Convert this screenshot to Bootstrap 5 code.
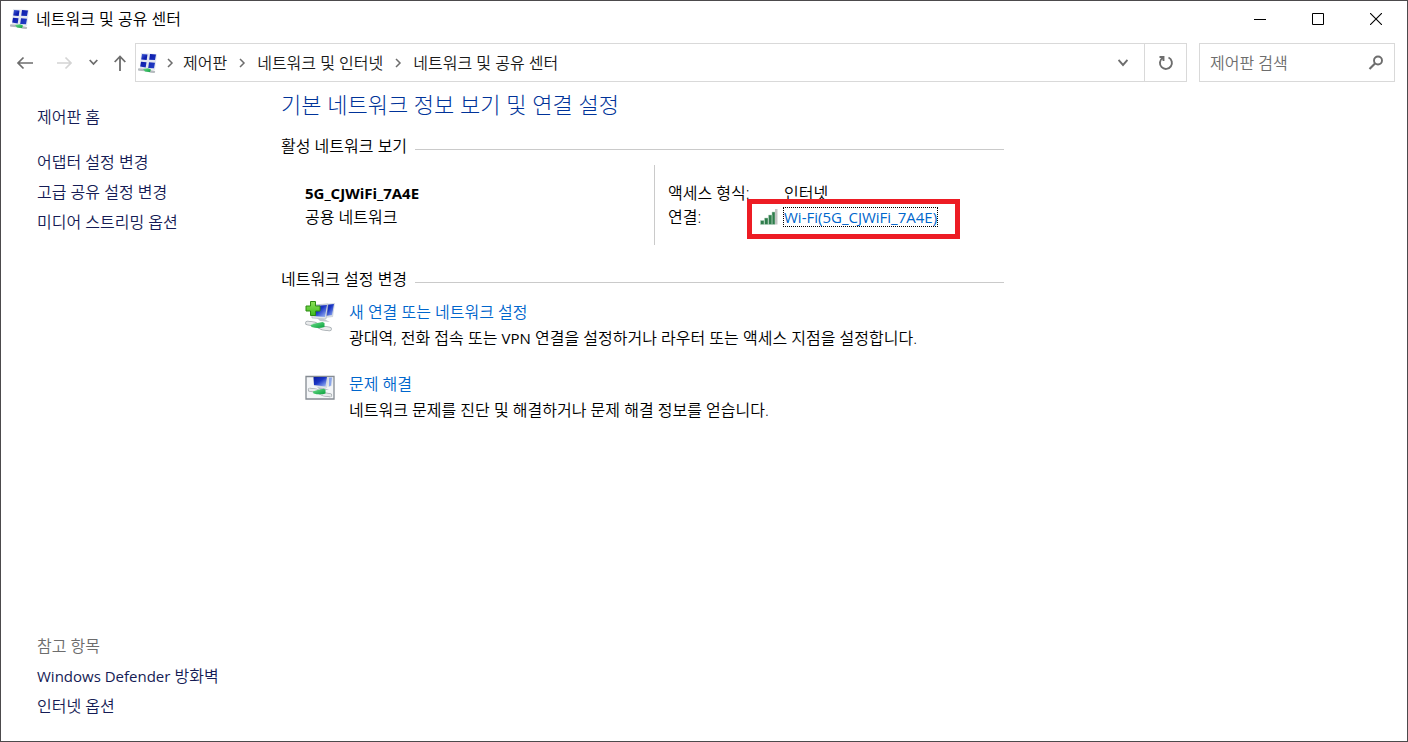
<!DOCTYPE html>
<html lang="ko">
<head>
<meta charset="utf-8">
<meta name="viewport" content="width=device-width, initial-scale=1">
<title>네트워크 및 공유 센터</title>
<link rel="stylesheet" href="https://cdn.jsdelivr.net/npm/bootstrap@5.3.0/dist/css/bootstrap.min.css">
<style>
  body { font: 350 16px/24px "Open Sans", "Noto Sans CJK KR", sans-serif; color: #000; background: #fff; }
  .win { border: 1px solid #4c4a4c; min-height: 100vh; }
  svg { display: block; flex: none; }
  a { text-decoration: none; }
  .titlebar { height: 36px; padding: 0 2px 0 9px; gap: 6px; }
  .cap { width: 58px; height: 36px; border: 0; background: none; padding: 0; display: grid; place-items: center; color: #000; }
  .toolbar { height: 39px; margin: 6px 12px 0 15px; }
  .tool { border: 0; background: none; padding: 0; color: #6d6d6d; }
  .tool:disabled { color: #d4d4d4; }
  .boxed { border: 1px solid #d9d9d9; height: 39px; }
  .address { padding-left: 2px; color: #6d6d6d; margin-left: 9px; }
  .crumb { color: #1a1a1a; }
  .sep { margin: 0 9px; }
  .refresh { width: 42px; height: 37px; border: 0; border-left: 1px solid #d9d9d9; background: none; padding: 0; display: grid; place-items: center; color: #6d6d6d; }
  .search { width: 196px; margin-left: 12px; padding: 0 10px; color: #6d6d6d; }
  .search input { border: 0; outline: 0; padding: 0; width: 100%; min-width: 0; background: none; font-weight: inherit; }
  .search input::placeholder { color: #6d6d6d; opacity: 1; }
  .side { width: 243px; padding: 20px 0 20px 36px; line-height: 30px; }
  .side a { color: #151c55; }
  .home { margin-bottom: 15px; }
  .see-also { color: #6d6d6d; }
  .latin { font-size: 15px; font-weight: 400; }
  .content-pane { width: 760px; padding: 8px 0 0 37px; }
  h1 { font-size: 22px; line-height: 28px; color: #003399; font-weight: 300; margin: 0 0 16px; }
  h2 { font-size: 16px; line-height: 24px; font-weight: 350; margin: 0; }
  .rule { height: 1px; background: #cacaca; margin: 6px 0 0 8px; }
  .active-net { height: 80px; margin: 7px 0 22px 24px; }
  .net-name { width: 350px; padding-top: 16px; border-right: 1px solid #cacaca; }
  .net-title { font-size: 15px; }
  .net-info { padding: 16px 0 0 13px; }
  .key { width: 116px; }
  .blue { color: #0066cc; }
  .wifi { position: relative; margin-left: -25px; gap: 5px; }
  .wifi::after { content: ""; position: absolute; inset: -6px -23px -10px -12px; border: 5px solid #ed1c24; pointer-events: none; }
  .wifi a { outline: 1px dotted #000; line-height: 18px; }
  .task { margin-left: 24px; gap: 13px; line-height: 26px; }
</style>
</head>
<body>
<svg width="0" height="0" class="position-absolute" aria-hidden="true">
  <defs>
    <linearGradient id="scr" x1="0" y1="0" x2="1" y2="1"><stop offset="0" stop-color="#0a1a9c"/><stop offset=".45" stop-color="#1a35c4"/><stop offset="1" stop-color="#a9c4fb"/></linearGradient>
    <linearGradient id="grn" x1="0" y1="0" x2="1" y2="1"><stop offset="0" stop-color="#6fdc8c"/><stop offset="1" stop-color="#07a13c"/></linearGradient>
    <linearGradient id="plus" x1="0" y1="0" x2="0" y2="1"><stop offset="0" stop-color="#8be05a"/><stop offset="1" stop-color="#3dbb1c"/></linearGradient>
    <linearGradient id="pane" x1="0" y1="0" x2="1" y2="1"><stop offset="0" stop-color="#4a6ae0"/><stop offset=".3" stop-color="#0c1cac"/><stop offset="1" stop-color="#2742c8"/></linearGradient>
    <symbol id="net" viewBox="0 0 20 20">
      <path d="M3 0l16 1-2 16-15-2z" fill="#e3e7f0"/>
      <path d="M4 1l5.500.5-.8 5.500-5.500-.5zM12 1l6 .5-1 5.500-5.800-.3zM3 8.700l5.500.5-.8 5.300-5.500-1zM11 9.200l6 .5-1 5.500-5.800-.3z" fill="url(#pane)"/>
      <path d="M1 16.500l6 .5 6 1.500 3 .3" stroke="#b5babe" stroke-width="2.300" fill="none" stroke-linecap="round"/>
      <path d="M5 16l5-.8 3 1.300-1 2.500-5-.5z" fill="url(#grn)"/>
    </symbol>
    <symbol id="cable" viewBox="0 0 26 12">
      <path d="M2 3l7 1 8 4 7 1" stroke="#9fa6ab" stroke-width="4.600" fill="none" stroke-linecap="round"/>
      <path d="M2 3l7 1 8 4 7 1" stroke="#e9ebec" stroke-width="3" fill="none" stroke-linecap="round"/>
      <path d="M5 5q5-2 12-3l2 1v4q-6 2-13 0z" fill="url(#grn)"/>
    </symbol>
  </defs>
</svg>
<div class="win d-flex flex-column">
  <header class="titlebar d-flex align-items-center">
    <svg width="20" height="20"><use href="#net"/></svg>
    <span class="me-auto">네트워크 및 공유 센터</span>
    <div class="d-flex">
      <button class="cap" aria-label="최소화"><svg width="12" height="12"><path d="M0 6.500h12" stroke="currentColor"/></svg></button>
      <button class="cap" aria-label="최대화"><svg width="12" height="12"><path d="M.5.5h11v11H.5z" fill="none" stroke="currentColor"/></svg></button>
      <button class="cap" aria-label="닫기"><svg width="12" height="12"><path d="M0 0l12 12M12 0L0 12" stroke="currentColor" stroke-width="1.100"/></svg></button>
    </div>
  </header>
  <div class="toolbar d-flex align-items-center">
    <button class="tool" aria-label="뒤로"><svg width="17" height="14"><path d="M17 7H2M7.500 1.500L2 7l5.500 5.500" fill="none" stroke="currentColor" stroke-width="1.700"/></svg></button>
    <button class="tool ms-4" aria-label="앞으로" disabled><svg width="16" height="14"><path d="M0 7h14M8.500 1.500L14 7l-5.500 5.500" fill="none" stroke="currentColor" stroke-width="1.700"/></svg></button>
    <button class="tool ms-3" aria-label="최근 위치"><svg width="9" height="7"><path d="M.7 1l3.800 4 3.800-4" fill="none" stroke="currentColor" stroke-width="1.800"/></svg></button>
    <button class="tool ms-3" aria-label="위로"><svg width="12" height="16"><path d="M6 16V2M.7 7L6 1.500 11.300 7" fill="none" stroke="currentColor" stroke-width="1.800"/></svg></button>
    <nav class="boxed address d-flex align-items-center flex-grow-1" aria-label="주소">
      <svg width="20" height="20"><use href="#net"/></svg>
      <svg class="sep" width="7" height="10"><path d="M1 1l4 4-4 4" fill="none" stroke="currentColor" stroke-width="1.500"/></svg>
      <a class="crumb" href="#">제어판</a>
      <svg class="sep" width="12" height="10"><path d="M4 1l4 4-4 4" fill="none" stroke="currentColor" stroke-width="1.500"/></svg>
      <a class="crumb" href="#">네트워크 및 인터넷</a>
      <svg class="sep" width="12" height="10"><path d="M4 1l4 4-4 4" fill="none" stroke="currentColor" stroke-width="1.500"/></svg>
      <a class="crumb me-auto" href="#">네트워크 및 공유 센터</a>
      <button class="tool me-3" aria-label="이전 위치"><svg width="10" height="8"><path d="M.5 1L5 6l4.500-5" fill="none" stroke="currentColor" stroke-width="1.900"/></svg></button>
      <button class="refresh" aria-label="새로 고침"><svg width="16" height="16"><path d="M10.500 2.500A6 6 0 1 1 4.500 3M1.500 2h4v4" fill="none" stroke="currentColor" stroke-width="1.900"/></svg></button>
    </nav>
    <div class="boxed search d-flex align-items-center">
      <input type="text" placeholder="제어판 검색" aria-label="제어판 검색">
      <svg width="16" height="16"><circle cx="10" cy="5.500" r="4" fill="none" stroke="currentColor" stroke-width="1.900"/><path d="M7 8.500L1.500 14" stroke="currentColor" stroke-width="2.200"/></svg>
    </div>
  </div>
  <div class="d-flex flex-grow-1">
    <aside class="side d-flex flex-column flex-shrink-0">
      <a href="#" class="home">제어판 홈</a>
      <a href="#">어댑터 설정 변경</a>
      <a href="#">고급 공유 설정 변경</a>
      <a href="#">미디어 스트리밍 옵션</a>
      <span class="mt-auto see-also">참고 항목</span>
      <a href="#"><span class="latin">Windows Defender</span> 방화벽</a>
      <a href="#">인터넷 옵션</a>
    </aside>
    <main class="content-pane">
      <h1>기본 네트워크 정보 보기 및 연결 설정</h1>
      <div class="d-flex align-items-center"><h2>활성 네트워크 보기</h2><div class="rule flex-grow-1"></div></div>
      <div class="active-net d-flex">
        <div class="net-name"><div class="fw-bold net-title">5G_CJWiFi_7A4E</div><div>공용 네트워크</div></div>
        <div class="net-info">
          <div class="d-flex"><span class="key">액세스 형식:</span><span>인터넷</span></div>
          <div class="d-flex"><span class="key">연결:</span>
            <div class="wifi d-flex align-items-center">
              <svg width="20" height="18"><g fill="#2f7d4c" stroke="#b5d3bf" stroke-width=".5"><path d="M1.500 12.500h3.500v4H1.500zM5.500 10h3.500v6.500H5.500zM9.500 7H13v9.500H9.500zM13 4h3v12.500h-3z"/></g><path d="M16 1h2.500v15.500H16z" fill="#c4c4c4"/></svg>
              <a href="#" class="blue latin">Wi-Fi(5G_CJWiFi_7A4E)</a>
            </div>
          </div>
        </div>
      </div>
      <div class="d-flex align-items-center"><h2>네트워크 설정 변경</h2><div class="rule flex-grow-1"></div></div>
      <div class="task d-flex mt-2">
        <svg width="31" height="34">
          <path d="M18 5l12-1-2 14-8 1z" fill="#d3d9e1"/><path d="M20 6l9-1-2 11-7 1z" fill="url(#scr)"/>
          <path d="M6 6l17-1-2 15-14-1z" fill="#e1e5e9" stroke="#aab2bb" stroke-width=".6"/><path d="M8 7l14-1-2 12-12-1z" fill="url(#scr)"/>
          <path d="M12 19l7 1 6 3-10-1z" fill="#c2c8cd"/>
          <use href="#cable" x="0" y="21" width="27" height="12"/>
          <path d="M5.500 2.500h5v4.500H15v5h-4.500v4.500h-5V12H1V7h4.500z" fill="url(#plus)" stroke="#2c8a12"/>
        </svg>
        <div><a href="#" class="blue">새 연결 또는 네트워크 설정</a><div>광대역, 전화 접속 또는 <span class="latin">VPN</span> 연결을 설정하거나 라우터 또는 액세스 지점을 설정합니다.</div></div>
      </div>
      <div class="task d-flex mt-3 pt-1">
        <svg class="mt-1" width="31" height="28">
          <path d="M1 1.500h28v22.500H1z" fill="#f4f6f8" stroke="#858b92" stroke-width="1.300"/>
          <path d="M23 2h5l-1 9-4 1z" fill="#dfe3ea"/><path d="M24 2.500h3l-1 8-2 1z" fill="#8ba6ea"/>
          <path d="M8 2h16l-2 11-13-2z" fill="#d5dae0"/><path d="M8.500 2H22l-1.500 9.500L9 10z" fill="url(#scr)"/>
          <path d="M12 12l7 1 5 2-9 0z" fill="#b9c0c6"/>
          <use href="#cable" x="2" y="12" width="26" height="11"/>
        </svg>
        <div><a href="#" class="blue">문제 해결</a><div>네트워크 문제를 진단 및 해결하거나 문제 해결 정보를 얻습니다.</div></div>
      </div>
    </main>
  </div>
</div>
<script src="https://cdn.jsdelivr.net/npm/bootstrap@5.3.0/dist/js/bootstrap.bundle.min.js"></script>
</body>
</html>
